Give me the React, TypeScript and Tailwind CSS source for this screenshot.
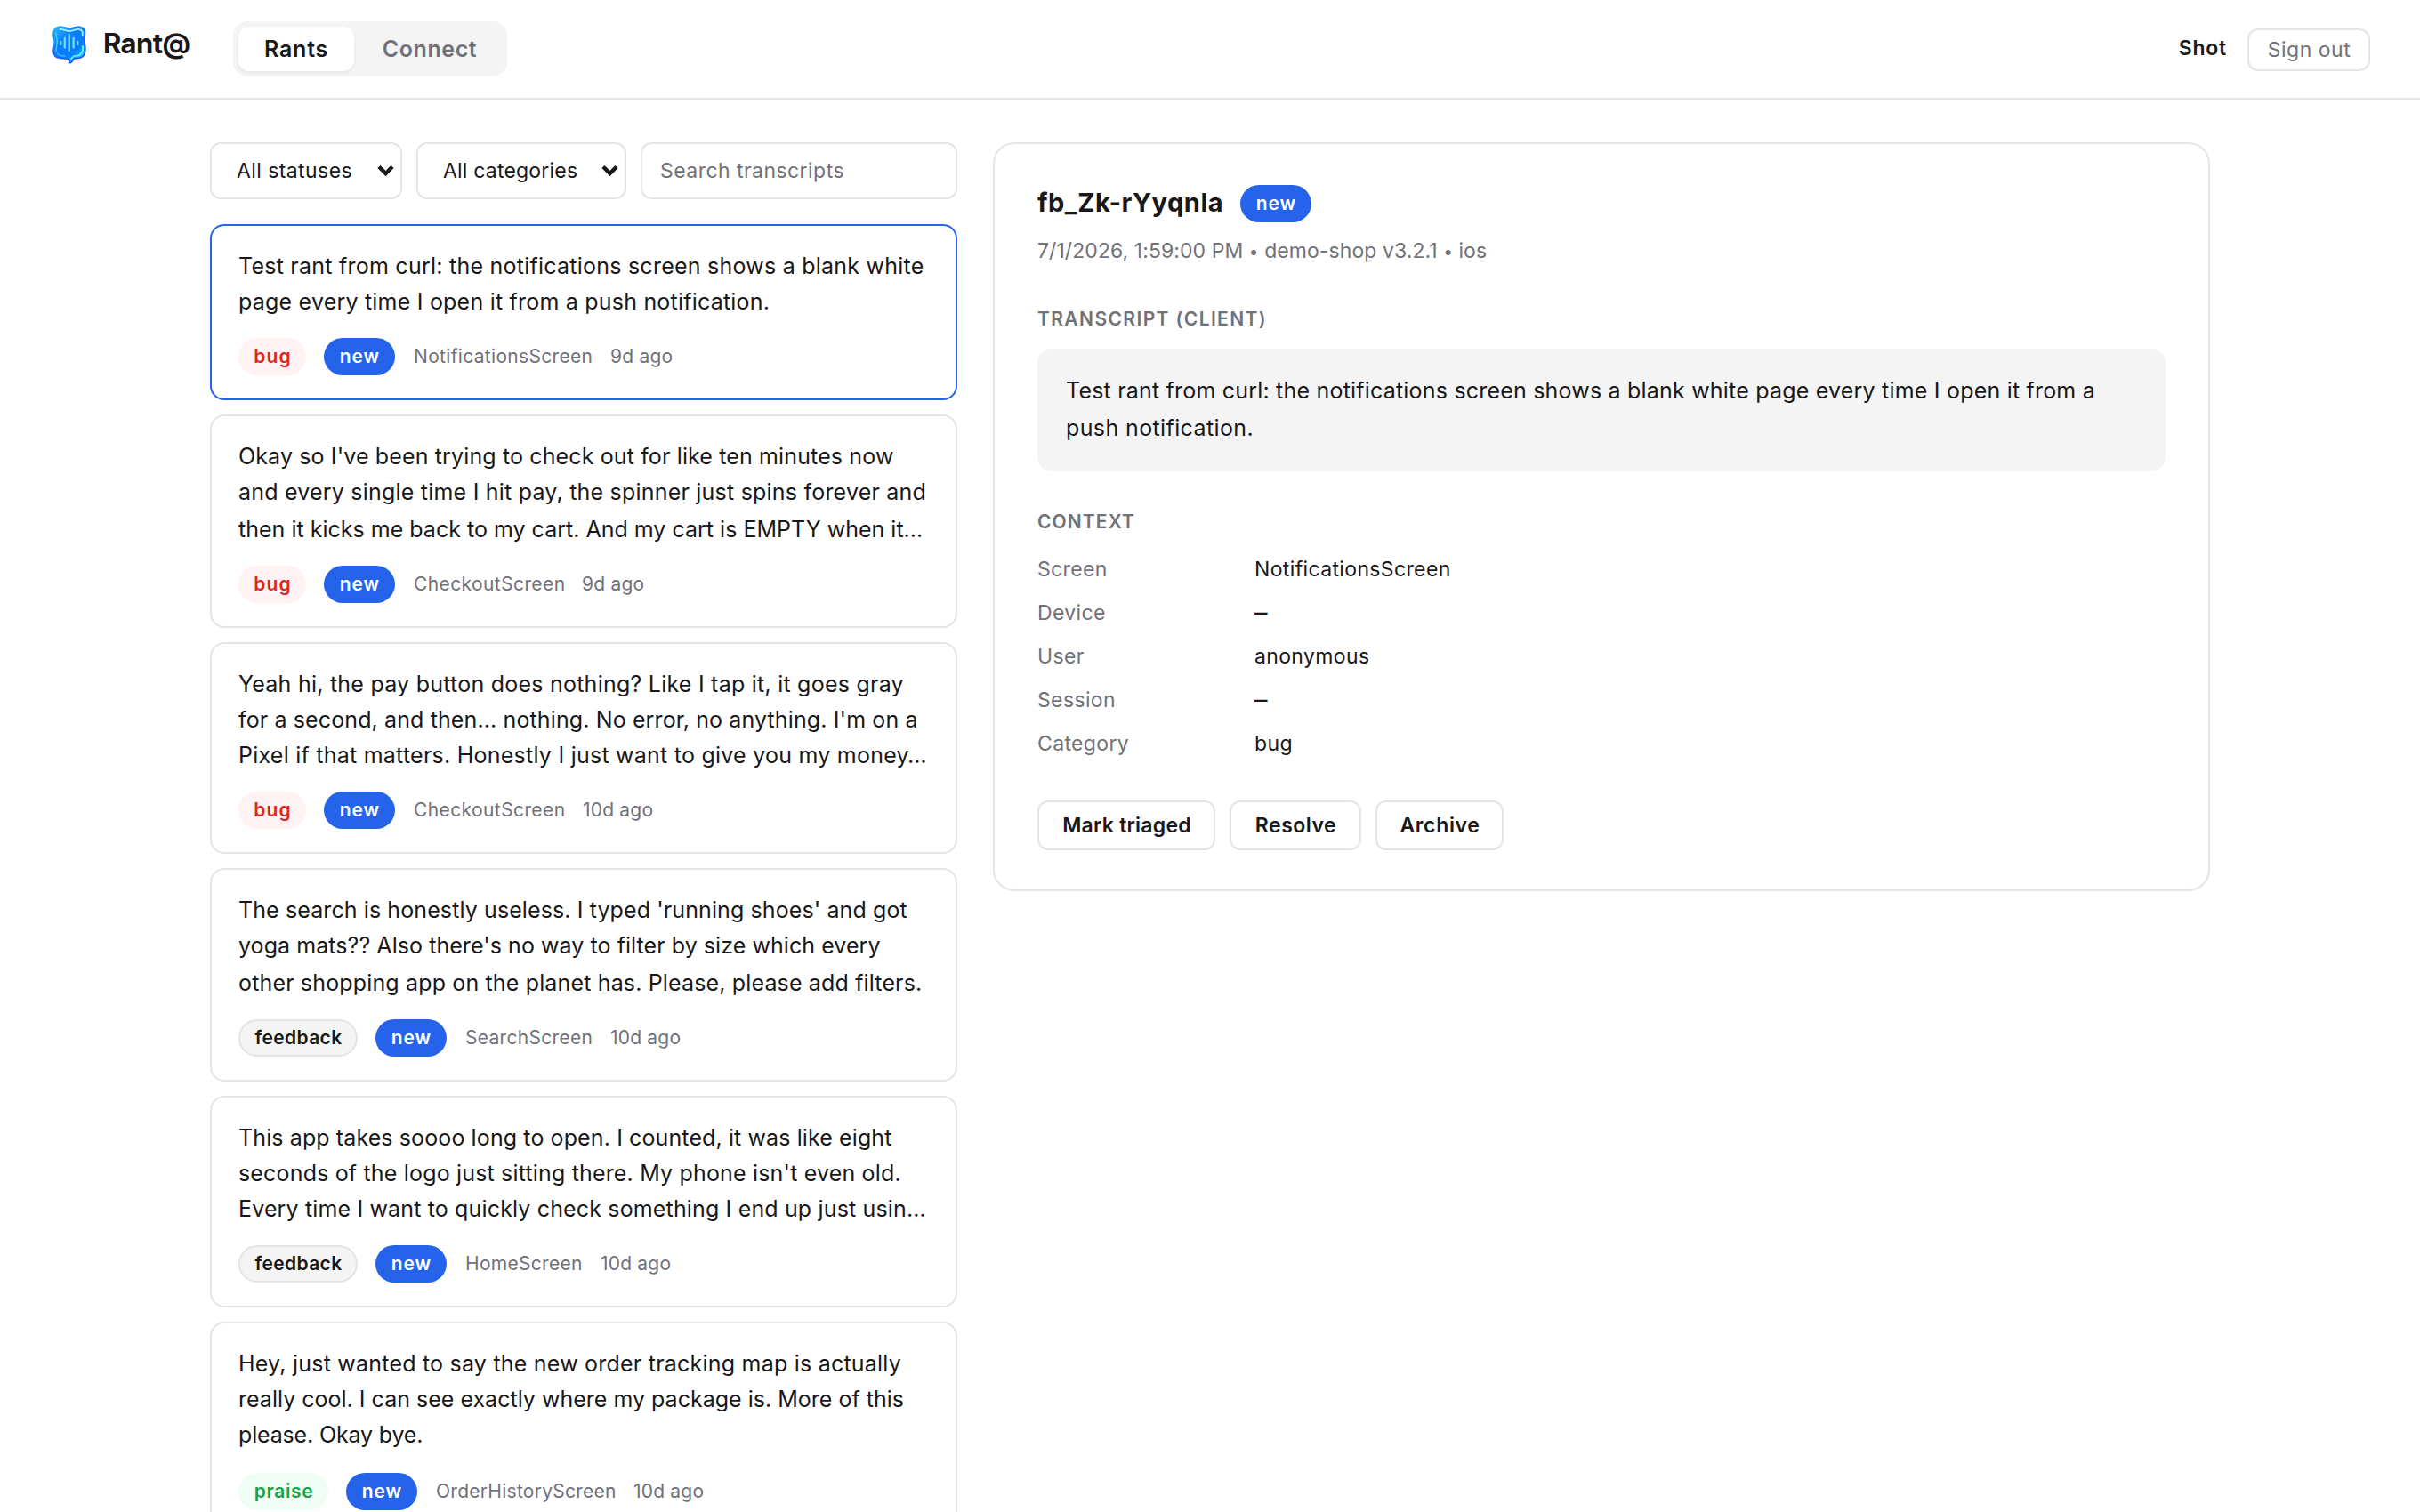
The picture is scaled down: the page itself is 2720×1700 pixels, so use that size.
import clsx from 'clsx';

type Line = { text: string; className: string };

type Rant = {
  category: 'bug' | 'feedback' | 'praise';
  screen: string;
  screenClass: string;
  age: string;
  lines: Line[];
  metaClass?: string;
  selected?: boolean;
};

const rants: Rant[] = [
  {
    category: 'bug',
    screen: 'NotificationsScreen',
    screenClass: 'w-[201px] tracking-[0.32px]',
    age: '9d ago',
    selected: true,
    lines: [
      { text: 'Test rant from curl: the notifications screen shows a blank white', className: 'h-10 tracking-[0.24px]' },
      { text: 'page every time I open it from a push notification.', className: 'h-10 tracking-[0.21px]' },
    ],
  },
  {
    category: 'bug',
    screen: 'CheckoutScreen',
    screenClass: 'w-[169px] tracking-[0.4px]',
    age: '9d ago',
    lines: [
      { text: "Okay so I've been trying to check out for like ten minutes now", className: 'h-10 tracking-[0.13px]' },
      { text: 'and every single time I hit pay, the spinner just spins forever and', className: 'h-[42px] tracking-[0.21px]' },
      { text: 'then it kicks me back to my cart. And my cart is EMPTY when it…', className: 'h-10 tracking-[0.01px]' },
    ],
  },
  {
    category: 'bug',
    screen: 'CheckoutScreen',
    screenClass: 'w-[170px] tracking-[0.4px]',
    age: '10d ago',
    lines: [
      { text: 'Yeah hi, the pay button does nothing? Like I tap it, it goes gray', className: 'h-10 tracking-[0.235px]' },
      { text: "for a second, and then... nothing. No error, no anything. I'm on a", className: 'h-10 tracking-[0.118px]' },
      { text: 'Pixel if that matters. Honestly I just want to give you my money…', className: 'h-10 tracking-[0.24px]' },
    ],
  },
  {
    category: 'feedback',
    screen: 'SearchScreen',
    screenClass: 'w-[143px] tracking-[0.3px]',
    age: '10d ago',
    lines: [
      { text: "The search is honestly useless. I typed 'running shoes' and got", className: 'h-10 tracking-[0.1px]' },
      { text: "yoga mats?? Also there's no way to filter by size which every", className: 'h-[42px] tracking-[0.06px]' },
      { text: 'other shopping app on the planet has. Please, please add filters.', className: 'h-10 tracking-[0.15px]' },
    ],
  },
  {
    category: 'feedback',
    screen: 'HomeScreen',
    screenClass: 'w-[132px] tracking-[0.3px]',
    age: '10d ago',
    lines: [
      { text: 'This app takes soooo long to open. I counted, it was like eight', className: 'h-10 tracking-[0.107px]' },
      { text: "seconds of the logo just sitting there. My phone isn't even old.", className: 'h-10 tracking-[0.17px]' },
      { text: 'Every time I want to quickly check something I end up just usin…', className: 'h-10 tracking-[0.15px]' },
    ],
  },
  {
    category: 'praise',
    screen: 'OrderHistoryScreen',
    screenClass: 'w-[202px] tracking-[0.27px]',
    age: '10d ago',
    metaClass: 'pt-0.5',
    lines: [
      { text: 'Hey, just wanted to say the new order tracking map is actually', className: 'h-10 tracking-[0.22px]' },
      { text: 'really cool. I can see exactly where my package is. More of this', className: 'h-10 tracking-[0.01px]' },
      { text: 'please. Okay bye.', className: 'h-10 tracking-[-0.16px]' },
    ],
  },
];

const context = [
  { label: 'Screen', value: 'NotificationsScreen' },
  { label: 'Device', value: null },
  { label: 'User', value: 'anonymous' },
  { label: 'Session', value: null },
  { label: 'Category', value: 'bug' },
];

const actions = [
  { label: 'Mark triaged', className: 'w-[200px] tracking-[0.24px]' },
  { label: 'Resolve', className: 'w-[148px] tracking-[0.5px]' },
  { label: 'Archive', className: 'w-[144px] tracking-[0.65px]' },
];

const badgeStyles = {
  bug: 'w-[76px] bg-[#fef2f2] text-[#dc2626] tracking-[1.2px]',
  feedback: 'w-[134px] border-2 border-[#e4e4e4] bg-[#f4f4f4] text-[#18181b] tracking-[0.34px]',
  praise: 'w-[101px] bg-[#f0fdf4] text-[#16a34a] tracking-[0.65px]',
  new: 'w-20 bg-[#2563eb] text-white tracking-[0.9px]',
};

function Badge({ kind }: { kind: keyof typeof badgeStyles }) {
  return (
    <span
      className={clsx(
        'flex h-[42px] shrink-0 items-center justify-center rounded-full pb-0.5 pl-px text-[21px] leading-none font-semibold',
        badgeStyles[kind]
      )}
    >
      {kind}
    </span>
  );
}

function Logo() {
  return (
    <svg width="44" height="44" viewBox="0 0 44 44" fill="none">
      <defs>
        <linearGradient id="body" x1="6" y1="2" x2="38" y2="40" gradientUnits="userSpaceOnUse">
          <stop offset="0" stopColor="#2fb4ff" />
          <stop offset="0.35" stopColor="#0a80ff" />
          <stop offset="0.7" stopColor="#0a7cff" />
          <stop offset="1" stopColor="#22d3ff" />
        </linearGradient>
        <linearGradient id="rim" x1="8" y1="2" x2="34" y2="42" gradientUnits="userSpaceOnUse">
          <stop offset="0" stopColor="#14b4ff" />
          <stop offset="0.5" stopColor="#1668f5" />
          <stop offset="1" stopColor="#1450f0" />
        </linearGradient>
      </defs>
      <path
        d="M11 2C15 1.500 17 4 22 4C27 4 29 1.500 33 2C38 2.500 40.500 6 39.500 10.500C38.700 14 38.500 15.500 39 19C39.500 23 40.500 26 39.700 30C39 35 35.500 37.500 31 37.500C27 37.500 26.500 38.500 25.500 40.500C24.500 42.500 22.500 43 21.500 42.500C22.300 40.500 21.500 38.500 18.500 38C16 37.500 14 37.800 12 37.500C7 37 4 34.500 4 30C4 26 5.500 22 5.200 18.500C5 15 3.500 13 4 9C4.500 4.500 7 2.500 11 2Z"
        fill="url(#body)"
        stroke="url(#rim)"
        strokeWidth="1.600"
      />
      <path
        d="M11.500 5C15.500 4.600 17.500 7 22 7C26.500 7 28.500 4.600 32.500 5C36.500 5.500 37.500 8 36.700 11.500"
        stroke="#a5ecff"
        strokeWidth="1.800"
        strokeLinecap="round"
      />
      <path d="M7 9C7 13 8.300 15 8.200 18.500C8.200 22.500 6.700 26 7 30" stroke="#4fd4ff" strokeWidth="1.200" strokeLinecap="round" />
      <path
        d="M37 24C37.500 31.500 35 34.300 30.500 34.600C26 34.800 25 36 24 38.500"
        stroke="#5ff0ff"
        strokeWidth="1.800"
        strokeLinecap="round"
      />
      <path d="M8.500 32C10 34.800 13 35 17 35" stroke="#38bdf8" strokeWidth="1.500" strokeLinecap="round" />
      <path
        d="M12.300 19V22M16.800 15V25.500M21.700 11V29M26.600 15V25.500M31.300 19V22"
        stroke="#6fdcff"
        strokeWidth="2.300"
        strokeLinecap="round"
      />
    </svg>
  );
}

function Chevron() {
  return (
    <svg width="19" height="14" viewBox="0 0 19 14" fill="none" className="shrink-0">
      <path d="M2 2.500L9.500 10L17 2.500" stroke="#18181b" strokeWidth="4.500" />
    </svg>
  );
}

function Header() {
  return (
    <header className="flex h-28 items-center border-b-2 border-[#e4e4e4] px-14">
      <div className="mt-7 flex h-[43px] items-center self-start">
        <Logo />
        <span className="mb-0.5 ml-4 w-[98px] text-[31px] leading-10 font-bold tracking-[-0.6px]">Rant@</span>
      </div>
      <nav className="ml-12 flex h-[62px] w-[308px] items-center gap-1 rounded-[16px] bg-[#f4f4f4] p-1.5 text-[25px] font-semibold">
        <button className="h-[50px] w-[130px] rounded-[12px] bg-white pt-0.5 tracking-[0.8px] shadow-[0_2px_4px_rgba(0,0,0,0.06)]">
          Rants
        </button>
        <button className="h-[50px] w-[162px] pt-0.5 tracking-[0.55px] text-[#71717a]">Connect</button>
      </nav>
      <div className="ml-auto flex items-center text-[23px]">
        <span className="mb-0.5 font-semibold tracking-[0.76px]">Shot</span>
        <button className="mt-0.5 ml-[23px] h-12 w-[138px] rounded-[12px] border-2 border-[#e4e4e4] pl-px tracking-[0.5px] text-[#71717a]">
          Sign out
        </button>
      </div>
    </header>
  );
}

function Filters() {
  return (
    <div className="flex gap-4 text-[23px]">
      <div className="flex h-16 w-[216px] items-center justify-between rounded-[12px] border-2 border-[#e4e4e4] pr-[7px] pl-7">
        <span className="tracking-[0.42px] whitespace-nowrap">All statuses</span>
        <Chevron />
      </div>
      <div className="flex h-16 w-[236px] items-center justify-between rounded-[12px] border-2 border-[#e4e4e4] pr-[7px] pl-7">
        <span className="tracking-[0.2px] whitespace-nowrap">All categories</span>
        <Chevron />
      </div>
      <input
        type="text"
        placeholder="Search transcripts"
        className="h-16 w-[356px] rounded-[12px] border-2 border-[#e4e4e4] px-5 tracking-[0.45px] placeholder:text-[#71717a]"
      />
    </div>
  );
}

function RantCard({ rant }: { rant: Rant }) {
  return (
    <article
      className={clsx(
        'rounded-[16px] border-2 px-[30px] pt-[25px] pb-[26px]',
        rant.selected ? 'border-[#2563eb]' : 'border-[#e4e4e4]'
      )}
    >
      {rant.lines.map((line) => (
        <p key={line.text} className={clsx('text-[25px] leading-10 whitespace-nowrap', line.className)}>
          {line.text}
        </p>
      ))}
      <div className={clsx('mt-[21px] flex items-center gap-5 text-[21px] leading-none text-[#71717a]', rant.metaClass)}>
        <Badge kind={rant.category} />
        <Badge kind="new" />
        <span className={clsx('mb-0.5 ml-px', rant.screenClass)}>{rant.screen}</span>
        <span className="mb-0.5 tracking-[0.2px]">{rant.age}</span>
      </div>
    </article>
  );
}

function RantDetail() {
  return (
    <section className="flex-1 self-start rounded-[24px] border-2 border-[#e4e4e4] px-12 pt-[46px] pb-11">
      <div className="flex items-start">
        <h2 className="w-[228px] text-[29px] leading-[39px] font-bold tracking-[0.5px]">fb_Zk-rYyqnla</h2>
        <Badge kind="new" />
      </div>
      <p className="mt-3.5 h-9 text-[23px] leading-9 tracking-[0.07px] text-[#71717a]">
        7/1/2026, 1:59:00 PM <span className="text-[19px]">•</span> demo-shop v3.2.1 <span className="text-[19px]">•</span> ios
      </p>

      <h3 className="mt-[42px] text-[21px] leading-[33px] font-semibold tracking-[1.4px] text-[#71717a]">TRANSCRIPT (CLIENT)</h3>
      <div className="mt-[17px] rounded-[16px] bg-[#f4f4f4] px-8 pt-[26px] pb-7 text-[25px] leading-[42px] whitespace-nowrap">
        <p className="tracking-[0.2px]">
          Test rant from curl: the notifications screen shows a blank white page every time I open it from a
        </p>
        <p className="tracking-[0.38px]">push notification.</p>
      </div>

      <h3 className="mt-10 text-[21px] leading-[33px] font-semibold tracking-[1.1px] text-[#71717a]">CONTEXT</h3>
      <dl className="mt-[13px] grid auto-rows-[49px] grid-cols-[244px_1fr] text-[23px] leading-[49px] tracking-[0.36px]">
        {context.map((row) => (
          <div key={row.label} className="contents">
            <dt className="text-[#71717a]">{row.label}</dt>
            {row.value ? <dd>{row.value}</dd> : <dd className="text-[29px] leading-[48px]">–</dd>}
          </div>
        ))}
      </dl>

      <div className="mt-[39px] flex gap-4">
        {actions.map((action) => (
          <button
            key={action.label}
            className={clsx('h-14 rounded-[12px] border-2 border-[#e4e4e4] pl-px text-[23px] font-semibold', action.className)}
          >
            {action.label}
          </button>
        ))}
      </div>
    </section>
  );
}

export default function App() {
  return (
    <div className="h-[1700px] overflow-hidden bg-white font-[Inter,sans-serif] text-[#18181b]">
      <Header />
      <main className="mx-auto flex w-[2248px] gap-10 pt-12">
        <div className="w-[840px] shrink-0">
          <Filters />
          <div className="mt-7 flex flex-col gap-4">
            {rants.map((rant) => (
              <RantCard key={rant.lines[0].text} rant={rant} />
            ))}
          </div>
        </div>
        <RantDetail />
      </main>
    </div>
  );
}
